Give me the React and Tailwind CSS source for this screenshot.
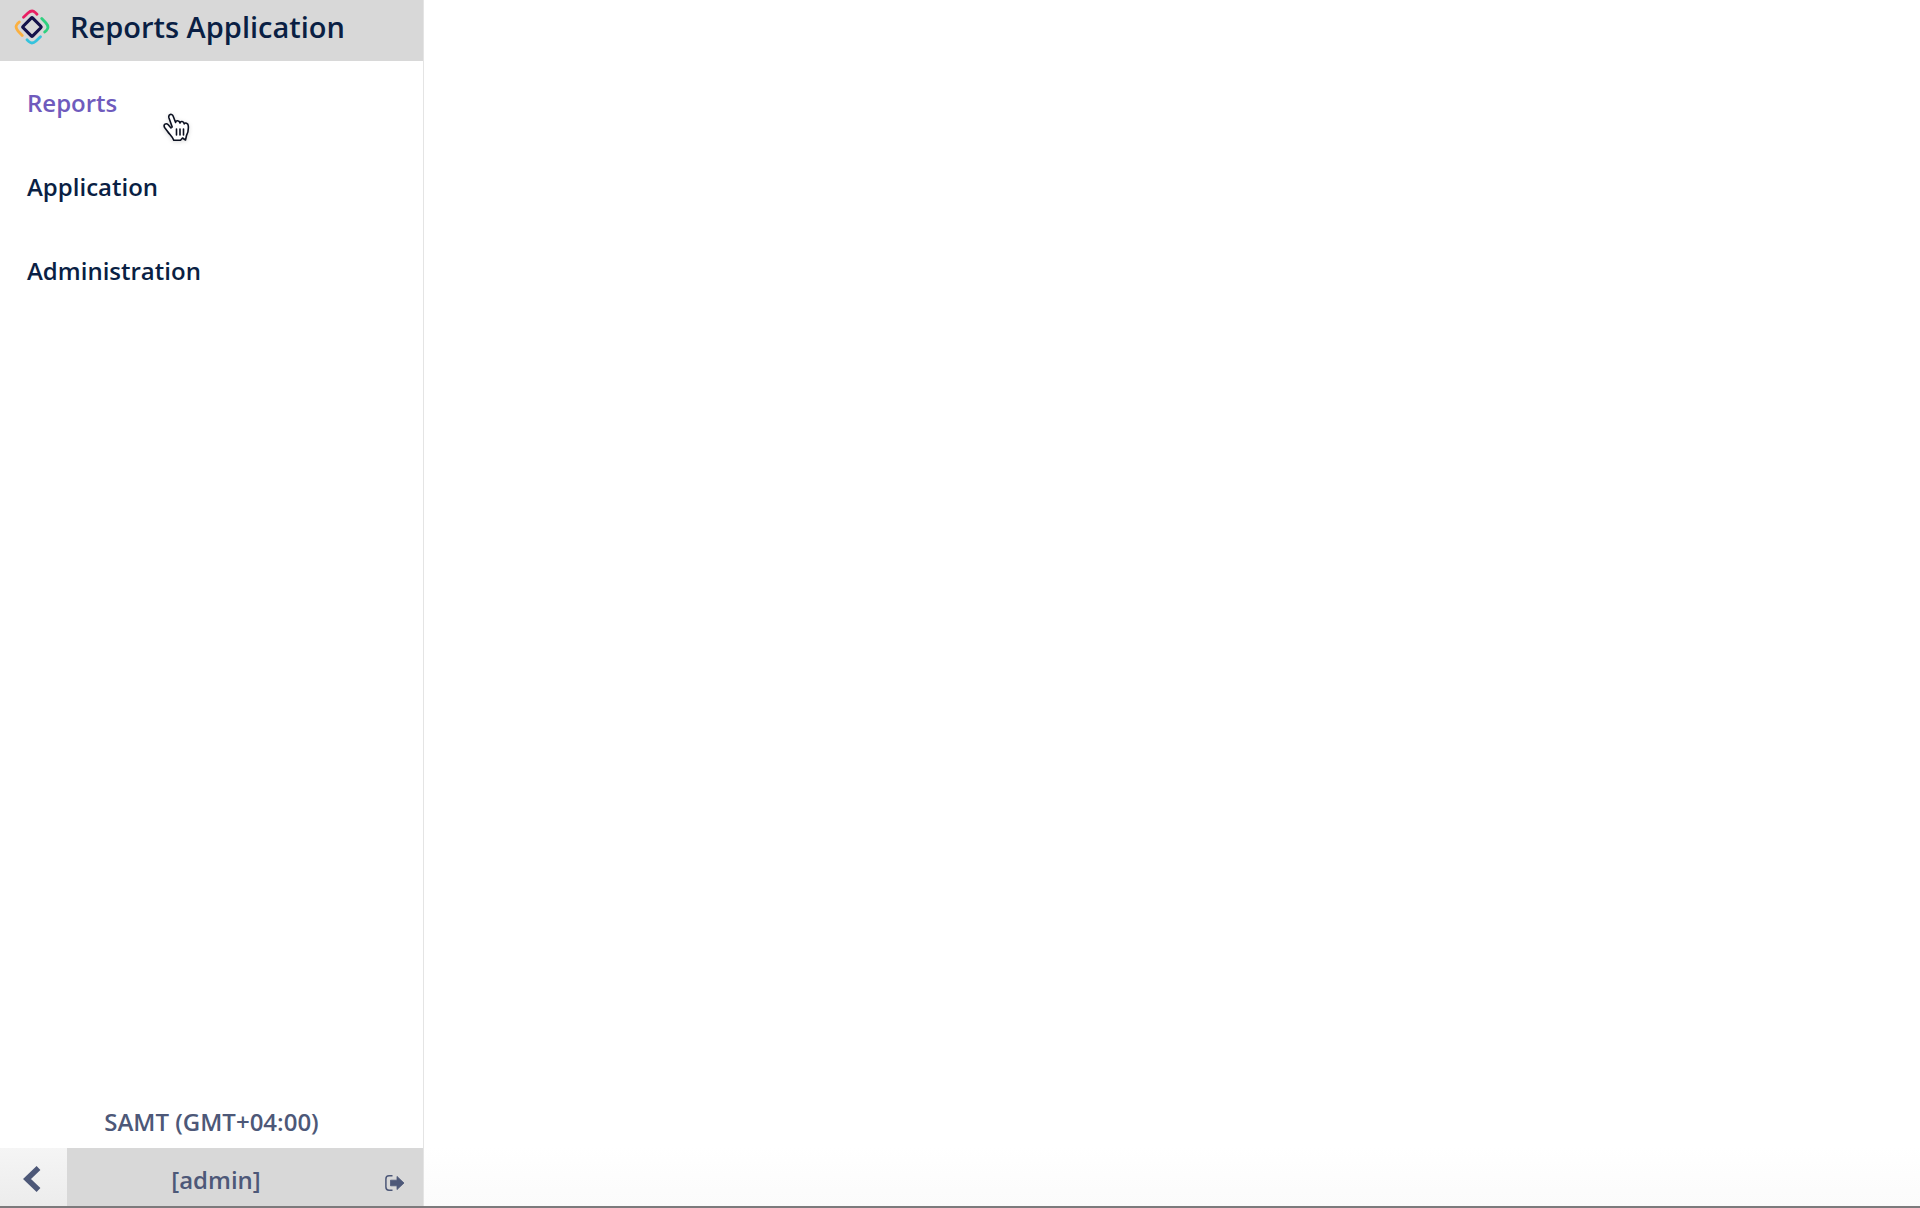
const links = [
    { label: "Reports", active: true },
    { label: "Application", active: false },
    { label: "Administration", active: false }
];

function Logo() {
    return (
        <svg
            className="w-9 h-9 shrink-0"
            viewBox="1 1 34 34"
            fill="none"
            strokeWidth="2.6"
            strokeLinecap="round"
            aria-hidden="true"
        >
            <rect
                x="11.6"
                y="11.6"
                width="12.8"
                height="12.8"
                rx="1"
                stroke="#14124a"
                strokeWidth="3"
                transform="rotate(45 18 18)"
            />
            <path d="M10 8.800L14.200 4.800Q18 1.400 21 4.200L22.700 6" stroke="#e91e63" />
            <path d="M27.200 10L31.200 14.200Q34.600 18 31.800 21L30 22.700" stroke="#2fd07f" />
            <path d="M26 27.200L21.800 31.200Q18 34.600 15 31.800L13.300 30" stroke="#35c3dd" />
            <path d="M8.800 26L4.800 21.800Q1.400 18 4.200 15L6 13.300" stroke="#fbb040" />
        </svg>
    );
}

function HandCursor() {
    return (
        <svg
            className="absolute left-[163px] top-[112px] w-7 h-8 drop-shadow-sm pointer-events-none"
            viewBox="0 0 28 32"
            fill="#ffffff"
            stroke="#0b1020"
            strokeWidth="1.6"
            strokeLinejoin="round"
            strokeLinecap="round"
            aria-hidden="true"
        >
            <path d="M9.200 15L6 6C4.900 2.400 9 1 10.200 4.200L12.600 10.500C12.600 8 16.300 8 17 11C17.500 8.700 20.800 9 21.200 12C22 10.200 25.300 11 25.300 14C25.600 18 25.300 20.500 23.500 23.500L22.500 28L19.500 26L17.500 28.200H10.800C9.800 25 6.500 22.500 4.600 19.500L1.600 15.500C0 12.500 3 10.600 5.200 12.800L8 16" />
            <path d="M13.500 17V23M17 17V23M20.500 17V23" fill="none" />
        </svg>
    );
}

export default function App() {
    return (
        <div className="relative flex min-h-screen border-b-2 border-[#7c7a7c] bg-white font-['Open_Sans',sans-serif] font-semibold text-[#0a1f44]">
            <aside className="flex flex-col w-[424px] shrink-0 border-r border-[#e4e4e4]">
                <header className="flex items-center gap-5 h-[61px] pl-3.5 pb-2 bg-[#d8d8d8]">
                    <Logo />
                    <h1 className="text-[29px] leading-10">
                        Reports Application
                    </h1>
                </header>

                <nav className="flex flex-col">
                    {links.map(link => (
                        <a
                            key={link.label}
                            href="#"
                            className={
                                link.active
                                    ? "flex items-center h-[84px] px-[27px] text-2xl text-[#6f5bbd]"
                                    : "flex items-center h-[84px] px-[27px] text-2xl"
                            }
                        >
                            {link.label}
                        </a>
                    ))}
                </nav>

                {/* Timezone and signed-in user */}
                <footer className="mt-auto text-2xl text-[#4d5878]">
                    <p className="pb-2.5 text-center">SAMT (GMT+04:00)</p>
                    <div className="flex h-[58px]">
                        <button
                            type="button"
                            aria-label="Collapse menu"
                            className="flex items-center justify-center w-[67px] pt-1 pr-1 bg-linear-to-b from-[#f5f5f5] to-[#ececec]"
                        >
                            <svg
                                className="w-5 h-7"
                                viewBox="0 0 20 28"
                                fill="none"
                                stroke="currentColor"
                                strokeWidth="5.5"
                            >
                                <path d="M16.500 3L5 14L16.500 25" />
                            </svg>
                        </button>
                        <div className="flex flex-1 items-center pr-[18px] bg-[#d8d8d8]">
                            <span className="flex-1 pt-1.5 pr-5 text-center">
                                [admin]
                            </span>
                            <button type="button" aria-label="Sign out" className="pt-3">
                                <svg
                                    className="w-5 h-4"
                                    viewBox="0 0 20 16"
                                    fill="none"
                                    stroke="currentColor"
                                    strokeWidth="1.5"
                                >
                                    <path d="M7.500 0.800H4Q0.900 0.800 0.900 4V12Q0.900 15.200 4 15.200H7.500" />
                                    <path
                                        d="M5.500 5.200H12V1.400L19 8L12 14.600V10.800H5.500Z"
                                        fill="currentColor"
                                        strokeWidth="0.800"
                                        strokeLinejoin="round"
                                    />
                                </svg>
                            </button>
                        </div>
                    </div>
                </footer>
            </aside>

            <main className="flex-1 bg-linear-to-b from-white from-95% to-[#fbfbfb]" />

            <HandCursor />
        </div>
    );
}
